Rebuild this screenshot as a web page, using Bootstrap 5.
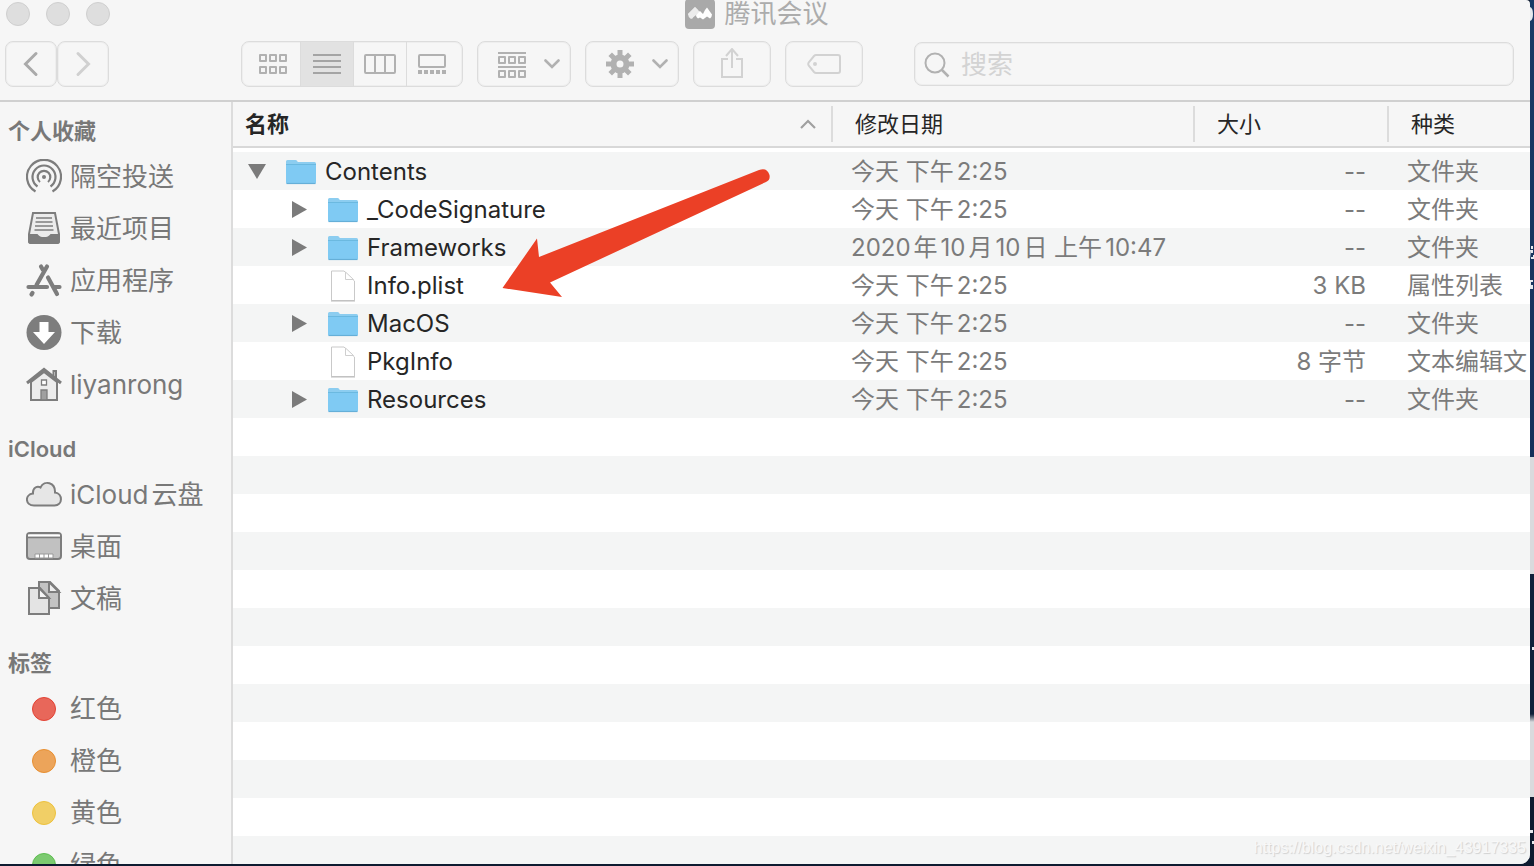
<!DOCTYPE html>
<html lang="zh-CN">
<head>
<meta charset="utf-8">
<meta name="viewport" content="width=device-width, initial-scale=1">
<title>腾讯会议</title>
<link href="https://cdn.jsdelivr.net/npm/bootstrap@5.3.0/dist/css/bootstrap.min.css" rel="stylesheet">
<script src="https://cdn.jsdelivr.net/npm/bootstrap@5.3.0/dist/js/bootstrap.bundle.min.js"></script>
<style>
  :root { --chrome: #f6f6f6; --line: #dcdcdc; --ink: #262626; --muted: #7b7b7b; --icon: #b1b1b1; --faint: #d2d2d2; }
  body { font-family: Inter, "Noto Sans CJK SC", sans-serif; background: #0e1b30; color: var(--ink); }
  svg { display: block; flex: none; }
  .desktop { padding: 0 4px 2px 0; }
  .wallpaper { width: 4px; top: 0; right: 0; bottom: 0;
    background: linear-gradient(#1a3a66, #16305a 457px, #d9dadd 457px, #d9dadd 574px, #10203a 574px, #10203a 714px, #d9dadd 722px, #d9dadd 797px, #0e1b30 797px); }
  .finder { background: var(--chrome); border-radius: 0 4px 10px 0; }
  .finder-top { border-bottom: 2px solid #d0d0d0; }
  .title-row { height: 28px; padding: 0 24px 0 6px; }
  .title-mid { gap: 9px; margin-right: 102px; }
  .light { width: 24px; height: 24px; border: 1px solid #cfcfcf; background: #dedede; }
  .title-text { font-size: 26px; line-height: 30px; color: #acacac; font-weight: 400; }
  .tools { padding: 13px 16px 13px 5px; }
  .tool { height: 46px; padding: 0; border: 1px solid var(--line); border-radius: 8px; background: transparent; color: var(--icon); display: flex; align-items: center; justify-content: center; box-shadow: inset 0 0 0 1px #eeeeee; }
  .w-nav { width: 52px; }
  .w-menu { width: 94px; gap: 18px; padding-left: 10px; }
  .w-act { width: 78px; color: var(--faint); }
  .views { width: 222px; height: 46px; border: 1px solid var(--line); border-radius: 8px; overflow: hidden; margin-left: 132px; margin-right: 14px; box-shadow: inset 0 0 0 1px #eeeeee; }
  .views button { border: 0; padding: 0; background: transparent; color: var(--icon); display: flex; align-items: center; justify-content: center; flex: 0 0 53px; }
  .views button + button { border-left: 1px solid var(--line); }
  .views button:first-child { flex-basis: 58px; padding-left: 4px; }
  .views button:last-child { flex: 1 1 0; padding-right: 6px; }
  .views button.chosen { background: #e2e2e2; color: #a4a4a4; }
  .tool-set { gap: 14px; }
  .find { margin-left: 51px; }
  .find svg { left: 10px; top: 10px; color: var(--icon); pointer-events: none; }
  .find input { height: 44px; font-size: 26px; line-height: 40px; padding: 1px 12px 0 46px; border: 1px solid var(--line); border-radius: 8px; background: transparent; box-shadow: inset 0 0 0 1px #eeeeee; }
  .find input::placeholder { color: #d3d3d3; opacity: 1; }
  .side { width: 233px; flex: none; border-right: 2px solid var(--line); padding-top: 9px; color: #787878; }
  .side h2 { height: 40px; line-height: 40px; margin: 0; padding-left: 8px; font-size: 22px; font-weight: 600; }
  .side ul + h2 { margin-top: 18px; }
  .side a { height: 52px; padding-left: 26px; gap: 8px; font-size: 26px; line-height: 52px; color: inherit; text-decoration: none; white-space: nowrap; display: flex; align-items: center; }
  .side svg { width: 36px; height: 36px; color: #7d7d7d; }
  .latin { margin-right: 3px; }
  .tag-dot { width: 24px; height: 24px; margin: 0 6px; border: 1px solid; border-radius: 50%; }
  .files { background: repeating-linear-gradient(#f4f5f5 0 38px, #ffffff 38px 76px) 0 50px / 100% 760px; min-width: 0; }
  .files table { width: 100%; table-layout: fixed; border-collapse: separate; border-spacing: 0; white-space: nowrap; }
  .c-date { width: 362px; } .c-size { width: 194px; } .c-kind { width: 143px; }
  .files th { height: 46px; padding: 0; font-size: 22px; font-weight: 400; background: var(--chrome); border-bottom: 2px solid #d8d8d8; line-height: 36px; }
  .files th > div { border-left: 2px solid var(--line); padding-left: 22px; height: 36px; }
  .files th:first-child > div { border-left: 0; padding: 0 15px 0 12px; font-weight: 600; }
  .files tbody::before { content: ""; display: block; height: 4px; }
  .files td { height: 38px; padding: 2px 0 0 20px; font-size: 24px; line-height: 36px; color: var(--muted); overflow: hidden; }
  .files td:nth-child(3) { text-align: right; padding-right: 21px; }
  .files td:first-child { padding-left: 14px; color: var(--ink); }
  .entry { height: 36px; gap: 9px; }
  .nested { padding-left: 42px; }
  .twist { width: 20px; height: 20px; padding: 0; border: 0; background: none; color: #7b7b7b; margin-right: 10px; }
  .num { margin: 0 3px; }
  .pointer { left: 268px; top: 66px; pointer-events: none; }
  .stamp { right: 4px; bottom: 4px; font: 16px/24px "Liberation Sans", sans-serif; color: #f8f8f8; text-shadow: 1px 1px 1px #d0d0d0; }
</style>
</head>
<body>
<svg class="d-none" aria-hidden="true">
  <symbol id="folder" viewBox="0 0 30 26"><path d="M0 2.500q0-1.500 1.500-1.500h8q1 0 1.500.8l.8 1.200H28.500Q30 3 30 4.500V23H0z" fill="#8ccdf0"/><path d="M0 6h30v17.500q0 1-1 1H1q-1 0-1-1z" fill="#7fcaf3"/><path d="M0 5.500h30" stroke="#6bb9e0"/><path d="M.5 24.500h29" stroke="#65afd8" stroke-width="1.200"/></symbol>
  <symbol id="page" viewBox="0 0 30 32"><path d="M3.500 1h12.500L26.500 11v19.500h-23z" fill="#fff" stroke="#c9c9c9"/><path d="M17.500 2v7.500h8z" fill="#fff" stroke="#cfcfcf"/><path d="M3 31h24" stroke="#bbb"/></symbol>
  <symbol id="right" viewBox="0 0 20 20"><path d="M3 1v17L18 9.500z" fill="currentColor"/></symbol>
  <symbol id="down" viewBox="0 0 20 20"><path d="M1 2h18l-9 15z" fill="currentColor"/></symbol>
  <symbol id="caret" viewBox="0 0 16 10"><path d="M1.500 1.500 8 8l6.500-6.500" fill="none" stroke="currentColor" stroke-width="2.600" stroke-linecap="round"/></symbol>
</svg>

<div class="desktop vh-100 position-relative overflow-hidden">
  <div class="wallpaper position-absolute" aria-hidden="true">
    <svg width="4" height="860" fill="#e6e9ee"><path d="M0 7q3 1 3 7t-3 7zM1 246h2v3H1zM0 250h3v3H1v4h2v-2h1v4H1zM0 280h3v2H1v3h2v4H0zM2 647h2v3H2zM0 830h3v3H0zM2 841h2v3H2z"/></svg>
  </div>
  <div class="finder h-100 d-flex flex-column overflow-hidden position-relative">
    <header class="finder-top">
      <div class="title-row d-flex align-items-center">
        <div class="d-flex gap-3"><span class="light rounded-circle"></span><span class="light rounded-circle"></span><span class="light rounded-circle"></span></div>
        <div class="title-mid flex-grow-1 d-flex justify-content-center align-items-center">
          <svg width="30" height="30" viewBox="0 0 30 30"><rect width="30" height="30" rx="4" fill="#a9a9a9"/><path d="M3 15l7-7 3 3-6 9z" fill="#e4e4e4"/><path d="M3 15q0 3 3 5l9-7-5-5z" fill="#ececec"/><path d="M11 16l4-4 3 3 2-4 2-2.500 5 7q0 2-2 4l-3-2-4 3-3-2-2 1q-2-1-2-3.500z" fill="#fff"/></svg>
          <h1 class="title-text m-0">腾讯会议</h1>
        </div>
      </div>
      <div class="tools d-flex align-items-center">
        <button class="tool w-nav" aria-label="后退"><svg width="16" height="26" viewBox="0 0 16 26" fill="none" stroke="#aaa" stroke-width="3" stroke-linecap="round"><path d="M13 2.500 2.500 13 13 23.500"/></svg></button>
        <button class="tool w-nav" aria-label="前进"><svg width="16" height="26" viewBox="0 0 16 26" fill="none" stroke="#d0d0d0" stroke-width="3" stroke-linecap="round"><path d="M3 2.500 13.500 13 3 23.500"/></svg></button>
        <div class="views d-flex" role="group" aria-label="显示">
          <button aria-label="图标"><svg width="30" height="22" viewBox="0 0 30 22" fill="none" stroke="currentColor" stroke-width="2"><path d="M2 2h6v6H2zM12 2h6v6h-6zM22 2h6v6h-6zM2 14h6v6H2zM12 14h6v6h-6zM22 14h6v6h-6z" stroke-linejoin="round"/></svg></button>
          <button class="chosen" aria-label="列表"><svg width="28" height="22" viewBox="0 0 28 22" stroke="currentColor" stroke-width="2"><path d="M0 2h28M0 8h28M0 14h28M0 20h28"/></svg></button>
          <button aria-label="分栏"><svg width="32" height="22" viewBox="0 0 32 22" fill="none" stroke="currentColor" stroke-width="2"><rect x="1" y="2" width="30" height="18" rx="1"/><path d="M11 2v18M21 2v18"/></svg></button>
          <button aria-label="画廊"><svg width="28" height="22" viewBox="0 0 28 22" fill="none" stroke="currentColor" stroke-width="2"><rect x="1" y="2" width="26" height="12" rx="1"/><path d="M0 19h28" stroke-width="4" stroke-dasharray="4 2"/></svg></button>
        </div>
        <div class="tool-set d-flex">
          <button class="tool w-menu" aria-label="分组"><svg width="28" height="28" viewBox="0 0 28 28" fill="none" stroke="currentColor" stroke-width="2"><path d="M0 3h28M0 17h28M1 7h6v6H1zM11 7h6v6h-6zM21 7h6v6h-6zM1 21h6v6H1zM11 21h6v6h-6zM21 21h6v6h-6z" stroke-linejoin="round"/></svg><svg width="16" height="10"><use href="#caret"/></svg></button>
          <button class="tool w-menu" aria-label="操作"><svg width="28" height="28" viewBox="-14 -14 28 28" stroke="currentColor"><path d="M0-14V-8M0 14V8M-14 0H-8M14 0H8M-9.800-9.800-6-6M9.800 9.800 6 6M-9.800 9.800-6 6M9.800-9.800 6-6" stroke-width="5"/><circle r="6.500" fill="none" stroke-width="6"/></svg><svg width="16" height="10"><use href="#caret"/></svg></button>
          <button class="tool w-act" aria-label="共享"><svg width="24" height="32" viewBox="0 0 24 32" fill="none" stroke="currentColor" stroke-width="2"><path d="M8 11H2v18h20V11h-6M12 20V1M6 8l6-7 6 7"/></svg></button>
          <button class="tool w-act" aria-label="标签"><svg width="34" height="22" viewBox="0 0 34 22" fill="none" stroke="currentColor" stroke-width="2"><path d="M9 2h22q2 0 2 2v14q0 2-2 2H9q-1 0-2-1l-5-6q-1.500-2 0-4l5-6q1-1 2-1z"/><circle cx="8" cy="11" r="2" fill="currentColor" stroke="none"/></svg></button>
        </div>
        <div class="find flex-grow-1 position-relative">
          <label class="visually-hidden" for="q">搜索</label>
          <svg class="position-absolute" width="26" height="26" viewBox="0 0 26 26" fill="none" stroke="currentColor" stroke-width="2"><circle cx="11" cy="11" r="9.500"/><path d="m17.500 17.500 7 7" stroke-width="2.500"/></svg>
          <input class="form-control" id="q" type="search" placeholder="搜索">
        </div>
      </div>
    </header>

    <div class="d-flex flex-grow-1 overflow-hidden position-relative">
      <nav class="side overflow-hidden">
        <h2>个人收藏</h2>
        <ul class="list-unstyled m-0">
          <li><a href="#"><svg viewBox="0 0 36 36" fill="none" stroke="currentColor" stroke-width="2.200"><path d="M9.500 32.500a17 17 0 1 1 17 0"/><path d="M11.500 27.500a11.500 11.500 0 1 1 13 0" /><path d="M14 23a6.300 6.300 0 1 1 8 0"/><circle cx="18" cy="18" r="2" fill="currentColor" stroke="none"/></svg>隔空投送</a></li>
          <li><a href="#"><svg viewBox="0 0 36 36" fill="none" stroke="currentColor" stroke-width="2"><path d="M7 2h22l4 21v7q0 2-2 2H5q-2 0-2-2v-7z" fill="#ececec"/><path d="M3 24h8q2 3 7 3t7-3h8v6q0 2-2 2H5q-2 0-2-2z" fill="currentColor"/><path d="M10 7h16M9.500 11h17M9 15h18M8.500 19h19" stroke-width="1.600"/></svg>最近项目</a></li>
          <li><a href="#"><svg viewBox="0 0 36 36" fill="none" stroke="currentColor" stroke-width="4.200" stroke-linecap="round"><path d="M21 3.500 10.500 22M2.500 24H21M28 24h5.500M6.500 30l-1 1.500M15 3.500l2 3.500M22 14.500l9 16.500"/></svg>应用程序</a></li>
          <li><a href="#"><svg viewBox="0 0 36 36"><circle cx="18" cy="17.500" r="17.500" fill="currentColor"/><path d="M13.500 7h9v10H29l-11 12-11-12h6.500z" fill="#fff"/></svg>下载</a></li>
          <li><a href="#"><svg viewBox="0 0 36 36" fill="none" stroke="currentColor" stroke-width="2"><path d="M27.500 10V4h2.500v8"/><path d="M5 15v18h26V15L18 5z" fill="#ececec"/><path d="M1 16 18 2.500 35 16" stroke-width="3"/><path d="M15.500 13h5v5h-5z" fill="#fff" stroke-width="1.300"/><path d="M15 23h6v10h-6z" fill="#a0a0a0" stroke-width="1.300"/></svg>liyanrong</a></li>
        </ul>
        <h2>iCloud</h2>
        <ul class="list-unstyled m-0">
          <li><a href="#"><svg viewBox="0 0 36 36"><path d="M8 28.500c-9 0-9.500-11-1-12-.5-6 4.500-8 7.500-6 4-8 15-5 14.500 5 8 1 8 13-.5 13z" fill="#e6e6e6" stroke="currentColor" stroke-width="2"/></svg><span><span class="latin">iCloud</span>云盘</span></a></li>
          <li><a href="#"><svg viewBox="0 0 36 36" stroke="currentColor"><rect x="1" y="4" width="34" height="26" rx="3" fill="#c1c1c1" stroke-width="2"/><path d="M2 5.500h32v2H2z" fill="#fff" stroke="none"/><path d="M1 8.500h34" stroke-width="1.500"/><path d="M9 25h18v4H9z" fill="#fff" stroke="#999" stroke-width="1"/><path d="M13.500 25v4M18 25v4M22.500 25v4" stroke="#999"/></svg>桌面</a></li>
          <li><a href="#"><svg viewBox="0 0 36 36" stroke="currentColor" stroke-width="2"><path d="M13 1h11l9 9v17H13z" fill="#c3c3c3"/><path d="M23 1v10h10z" fill="#eee"/><path d="M3 7h11l9 10v16H3z" fill="#e4e4e4"/><path d="M13 7v10h10z" fill="#f6f6f6"/></svg>文稿</a></li>
        </ul>
        <h2>标签</h2>
        <ul class="list-unstyled m-0">
          <li><a href="#"><span class="tag-dot" style="background:#e8675a;border-color:#e34234"></span>红色</a></li>
          <li><a href="#"><span class="tag-dot" style="background:#eca45a;border-color:#e88f30"></span>橙色</a></li>
          <li><a href="#"><span class="tag-dot" style="background:#f1cf66;border-color:#edc13c"></span>黄色</a></li>
          <li><a href="#"><span class="tag-dot" style="background:#7cca70;border-color:#5dbd4f"></span>绿色</a></li>
        </ul>
      </nav>

      <main class="files flex-grow-1 overflow-hidden position-relative">
        <table>
          <colgroup><col><col class="c-date"><col class="c-size"><col class="c-kind"></colgroup>
          <thead>
            <tr>
              <th scope="col"><div class="d-flex justify-content-between align-items-center">名称<svg width="16" height="10" viewBox="0 0 16 10" fill="none" stroke="#a0a0a0" stroke-width="2.200"><path d="M1 9l7-7 7 7"/></svg></div></th>
              <th scope="col"><div>修改日期</div></th>
              <th scope="col"><div>大小</div></th>
              <th scope="col"><div>种类</div></th>
            </tr>
          </thead>
          <tbody>
            <tr><td><div class="entry d-flex align-items-center"><button class="twist" aria-label="折叠"><svg width="20" height="20"><use href="#down"/></svg></button><svg width="30" height="26"><use href="#folder"/></svg>Contents</div></td><td>今天 下午<span class="num">2:25</span></td><td>--</td><td>文件夹</td></tr>
            <tr><td><div class="entry nested d-flex align-items-center"><button class="twist" aria-label="展开"><svg width="20" height="20"><use href="#right"/></svg></button><svg width="30" height="26"><use href="#folder"/></svg>_CodeSignature</div></td><td>今天 下午<span class="num">2:25</span></td><td>--</td><td>文件夹</td></tr>
            <tr><td><div class="entry nested d-flex align-items-center"><button class="twist" aria-label="展开"><svg width="20" height="20"><use href="#right"/></svg></button><svg width="30" height="26"><use href="#folder"/></svg>Frameworks</div></td><td><span class="num ms-0">2020</span>年<span class="num">10</span>月<span class="num">10</span>日 上午<span class="num">10:47</span></td><td>--</td><td>文件夹</td></tr>
            <tr><td><div class="entry nested d-flex align-items-center"><span class="twist"></span><svg width="30" height="32"><use href="#page"/></svg>Info.plist</div></td><td>今天 下午<span class="num">2:25</span></td><td>3 KB</td><td>属性列表</td></tr>
            <tr><td><div class="entry nested d-flex align-items-center"><button class="twist" aria-label="展开"><svg width="20" height="20"><use href="#right"/></svg></button><svg width="30" height="26"><use href="#folder"/></svg>MacOS</div></td><td>今天 下午<span class="num">2:25</span></td><td>--</td><td>文件夹</td></tr>
            <tr><td><div class="entry nested d-flex align-items-center"><span class="twist"></span><svg width="30" height="32"><use href="#page"/></svg>PkgInfo</div></td><td>今天 下午<span class="num">2:25</span></td><td>8 字节</td><td>文本编辑文</td></tr>
            <tr><td><div class="entry nested d-flex align-items-center"><button class="twist" aria-label="展开"><svg width="20" height="20"><use href="#right"/></svg></button><svg width="30" height="26"><use href="#folder"/></svg>Resources</div></td><td>今天 下午<span class="num">2:25</span></td><td>--</td><td>文件夹</td></tr>
          </tbody>
        </table>
        <svg class="pointer position-absolute" width="272" height="132" viewBox="0 0 272 132" aria-hidden="true"><path d="M1.500 120 36 70.500l2 18.500L258 2q8-3 10.500 5 1 5-3.500 7L49 114.500l12 14.500z" fill="#eb4026"/></svg>
      </main>
    </div>
    <div class="stamp position-absolute">https://blog.csdn.net/weixin_43917335</div>
  </div>
</div>
</body>
</html>
